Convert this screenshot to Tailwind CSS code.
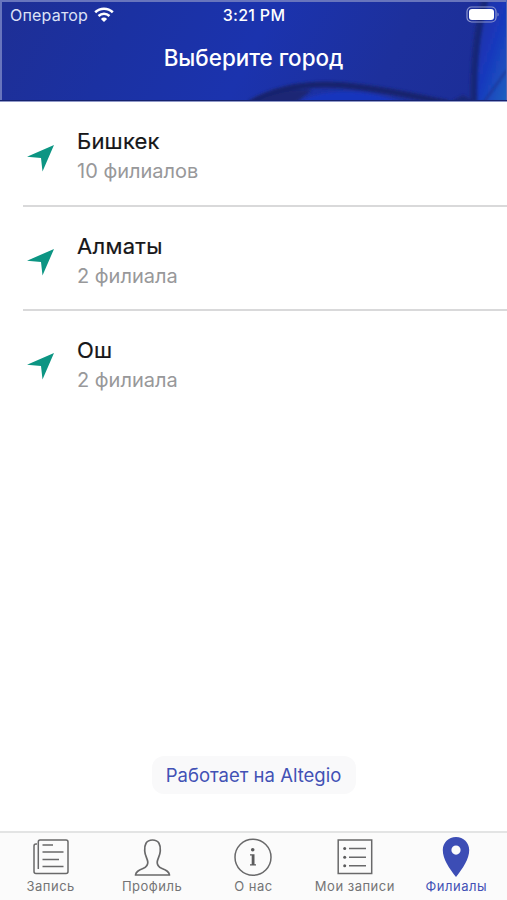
<!DOCTYPE html>
<html lang="ru">
<head>
<meta charset="utf-8">
<title>Выберите город</title>
<script src="https://cdn.jsdelivr.net/npm/@tailwindcss/browser@4"></script>
</head>
<body class="bg-white">
<div class="w-[507px] h-[900px] flex flex-col overflow-hidden bg-white font-['Inter',sans-serif]">
  <header class="relative h-[102px] shrink-0 overflow-hidden text-white">
    <svg class="absolute inset-0" width="507" height="102" viewBox="0 0 507 102">
      <defs>
        <linearGradient id="bg" x1="0" y1="0.2" x2="1" y2="0.3">
          <stop offset="0" stop-color="#1e2f96"/><stop offset=".25" stop-color="#1b31a2"/><stop offset=".52" stop-color="#1b33ae"/><stop offset=".8" stop-color="#1d309c"/><stop offset="1" stop-color="#1c2e98"/>
        </linearGradient>
        <linearGradient id="wing" x1="0" y1="0" x2="1" y2="1">
          <stop offset="0" stop-color="#1d2f9e"/><stop offset=".5" stop-color="#1938bd"/><stop offset="1" stop-color="#1a66c0"/>
        </linearGradient>
        <filter id="soft" x="-20%" y="-20%" width="140%" height="140%"><feGaussianBlur stdDeviation="1.500"/></filter>
      </defs>
      <rect width="507" height="102" fill="url(#bg)"/>
      <g filter="url(#soft)">
        <path d="M487 0C480 28 475 58 475 102H510V0Z" fill="url(#wing)"/>
        <path d="M485 0C477 30 473 60 474 102" fill="none" stroke="#192678" stroke-width="7"/>
        <path d="M484 102L507 70" fill="none" stroke="#1b3190" stroke-width="2"/>
        <path d="M296 106C312 88 365 86 412 106Z" fill="#1835bd"/>
        <path d="M250 103C280 86 310 83 340 85C380 88 412 96 448 103" fill="none" stroke="#18236d" stroke-width="6"/>
        <path d="M252 104C268 94 290 89 312 90L294 104Z" fill="#1a2674"/>
        <path d="M450 102L463 95L476 102Z" fill="#192678"/>
      </g>
      <path d="M0 1H507" stroke="#6875bd" stroke-width="2"/>
      <path d="M1 0V102" stroke="#6875bd" stroke-width="2"/>
      <path d="M506.500 0V102" stroke="#5367b4"/>
      <path d="M0 100.500H507" stroke="#16236f"/>
      <path d="M0 101.500H507" stroke="#9099c8"/>
    </svg>
    <div class="relative grid grid-cols-3 items-center h-[30px] pl-[10px] pr-[7px]">
      <div class="flex items-center gap-[6px]">
        <span class="text-[16px] leading-[20px] -mt-[1px] tracking-[0.2px] text-[#dce1f6]">Оператор</span>
        <svg width="20" height="16" viewBox="0 0 20 16">
          <path d="M1.200 5.300C6.300.500 13.700.500 18.800 5.300" fill="none" stroke="#fff" stroke-width="2.600"/>
          <path d="M4.500 9C7.700 6 12.300 6 15.500 9" fill="none" stroke="#fff" stroke-width="2.400"/>
          <path d="M6.900 11.900C8.700 10.100 11.300 10.100 13.100 11.900L10 15Z" fill="#fff"/>
        </svg>
      </div>
      <span class="text-center text-[16px] leading-[20px] -mt-[1px] -ml-[2px] tracking-[0.3px] font-medium whitespace-nowrap">3:21 PM</span>
      <svg class="justify-self-end" width="34" height="18" viewBox="0 0 34 18">
        <rect x="1" y="1" width="29" height="15" rx="4.500" fill="none" stroke="#8c96d0" stroke-width="1.200"/>
        <rect x="3" y="3" width="25" height="11" rx="3" fill="#fff"/>
        <path d="M31.500 6.500C33 7.300 33 9.700 31.500 10.500Z" fill="#8c96d0"/>
      </svg>
    </div>
    <h1 class="relative text-center text-[22.400px] leading-[28px] mt-[14px] font-medium whitespace-nowrap">Выберите город</h1>
  </header>

  <main class="flex-1 flex flex-col">
    <ul>
      <li class="ml-[23px] h-[105px] border-b-2 border-[#d9d9da] flex pt-[24px]">
        <svg class="mt-[18px] ml-[4px]" width="28" height="28" viewBox="0 0 28 28"><path d="M27 1L0 12.700L14 14L15.500 27.500Z" fill="#0c9583"/></svg>
        <div class="ml-[22px]">
          <p class="text-[22px] leading-[30px] tracking-[0.2px] text-[#161618] [-webkit-text-stroke:0.2px_#161618]">Бишкек</p>
          <p class="text-[20px] leading-[28px] mt-[1px] text-[#98989a]">10 филиалов</p>
        </div>
      </li>
      <li class="ml-[23px] h-[104px] border-b-2 border-[#d9d9da] flex pt-[24px]">
        <svg class="mt-[17px] ml-[4px]" width="28" height="28" viewBox="0 0 28 28"><path d="M27 1L0 12.700L14 14L15.500 27.500Z" fill="#0c9583"/></svg>
        <div class="ml-[22px]">
          <p class="text-[22px] leading-[30px] tracking-[0.3px] text-[#161618] [-webkit-text-stroke:0.2px_#161618]">Алматы</p>
          <p class="text-[20px] leading-[28px] mt-[1px] text-[#98989a]">2 филиала</p>
        </div>
      </li>
      <li class="ml-[23px] h-[104px] flex pt-[24px]">
        <svg class="mt-[17px] ml-[4px]" width="28" height="28" viewBox="0 0 28 28"><path d="M27 1L0 12.700L14 14L15.500 27.500Z" fill="#0c9583"/></svg>
        <div class="ml-[22px]">
          <p class="text-[22px] leading-[30px] tracking-[0.2px] text-[#161618] [-webkit-text-stroke:0.2px_#161618]">Ош</p>
          <p class="text-[20px] leading-[28px] mt-[1px] text-[#98989a]">2 филиала</p>
        </div>
      </li>
    </ul>
    <a class="mt-auto mb-[37px] self-center w-[204px] h-[38px] pt-[2px] rounded-[12px] bg-[#f9f9fa] flex items-center justify-center text-[18.500px] text-[#4251b5] whitespace-nowrap">Работает на Altegio</a>
  </main>

  <nav class="h-[69px] shrink-0 border-t-2 border-[#e3e4e4] bg-[#fbfbfb] grid grid-cols-5 text-[13px] leading-[14px] tracking-[0.5px] text-[#747476] whitespace-nowrap">
    <div class="flex flex-col items-center pt-[4px]">
      <svg width="40" height="42" viewBox="-1.500 0 40 42" fill="none" stroke="#69696a" stroke-width="1.500">
        <path d="M7.500 3H33.500Q35.500 3 35.500 5V34.500Q35.500 36.500 33.500 36.500H3.500Q1.500 36.500 1.500 34.500V9Q1.500 7 3.500 7H4.500M5.800 32V5Q5.800 3 7.500 3"/>
        <path d="M10 8H20.500M10 15H31M10 22.500H26.500M10 29.500H31"/>
      </svg>
      <span>Запись</span>
    </div>
    <div class="flex flex-col items-center pt-[4px]">
      <svg width="40" height="42" viewBox="0 0 40 42" fill="none" stroke="#69696a" stroke-width="1.700" stroke-linejoin="round">
        <path d="M20.500 3C14 3 12.300 8 12.700 14C13 19 15.500 21.500 15.800 25C16 28.500 14.300 30.200 11 31.500C6.500 33.300 3.900 34.500 3.500 38H37.500C37.100 34.500 34.500 33.300 30 31.500C26.700 30.200 25 28.500 25.200 25C25.500 21.500 28 19 28.300 14C28.700 8 27 3 20.500 3Z"/>
      </svg>
      <span>Профиль</span>
    </div>
    <div class="flex flex-col items-center pt-[4px]">
      <svg width="40" height="42" viewBox="0 0 40 42">
        <circle cx="20" cy="20.300" r="18" fill="none" stroke="#69696a" stroke-width="1.500"/>
        <circle cx="19.700" cy="12.700" r="1.800" fill="#5b5b5c"/>
        <path d="M17 17.200H21.500V27.300H23V28.500H17V27.300H18.700V18.400H17Z" fill="#5b5b5c"/>
      </svg>
      <span>О нас</span>
    </div>
    <div class="flex flex-col items-center pt-[4px]">
      <svg width="40" height="42" viewBox="0 0 40 42">
        <rect x="3.200" y="3" width="33.500" height="33.500" fill="none" stroke="#69696a" stroke-width="1.500"/>
        <path d="M14 11.500H31M14 20.300H31M14 28.700H31" stroke="#69696a" stroke-width="1.500"/>
        <g fill="#5b5b5c"><circle cx="9.700" cy="11.500" r="1.500"/><circle cx="9.700" cy="20.300" r="1.500"/><circle cx="9.700" cy="28.700" r="1.500"/></g>
      </svg>
      <span>Мои записи</span>
    </div>
    <div class="flex flex-col items-center pt-[4px] text-[#4251b5]">
      <svg width="40" height="42" viewBox="0 0 40 42"><path fill="#3c4db5" fill-rule="evenodd" d="M20 0C12.500 0 6.800 5.700 6.800 13C6.800 22 13 31 20 40C27 31 33.200 22 33.200 13C33.200 5.700 27.500 0 20 0ZM20 8.500A4.600 4.600 0 1 1 20 17.700A4.600 4.600 0 1 1 20 8.500Z"/></svg>
      <span>Филиалы</span>
    </div>
  </nav>
</div>
</body>
</html>
